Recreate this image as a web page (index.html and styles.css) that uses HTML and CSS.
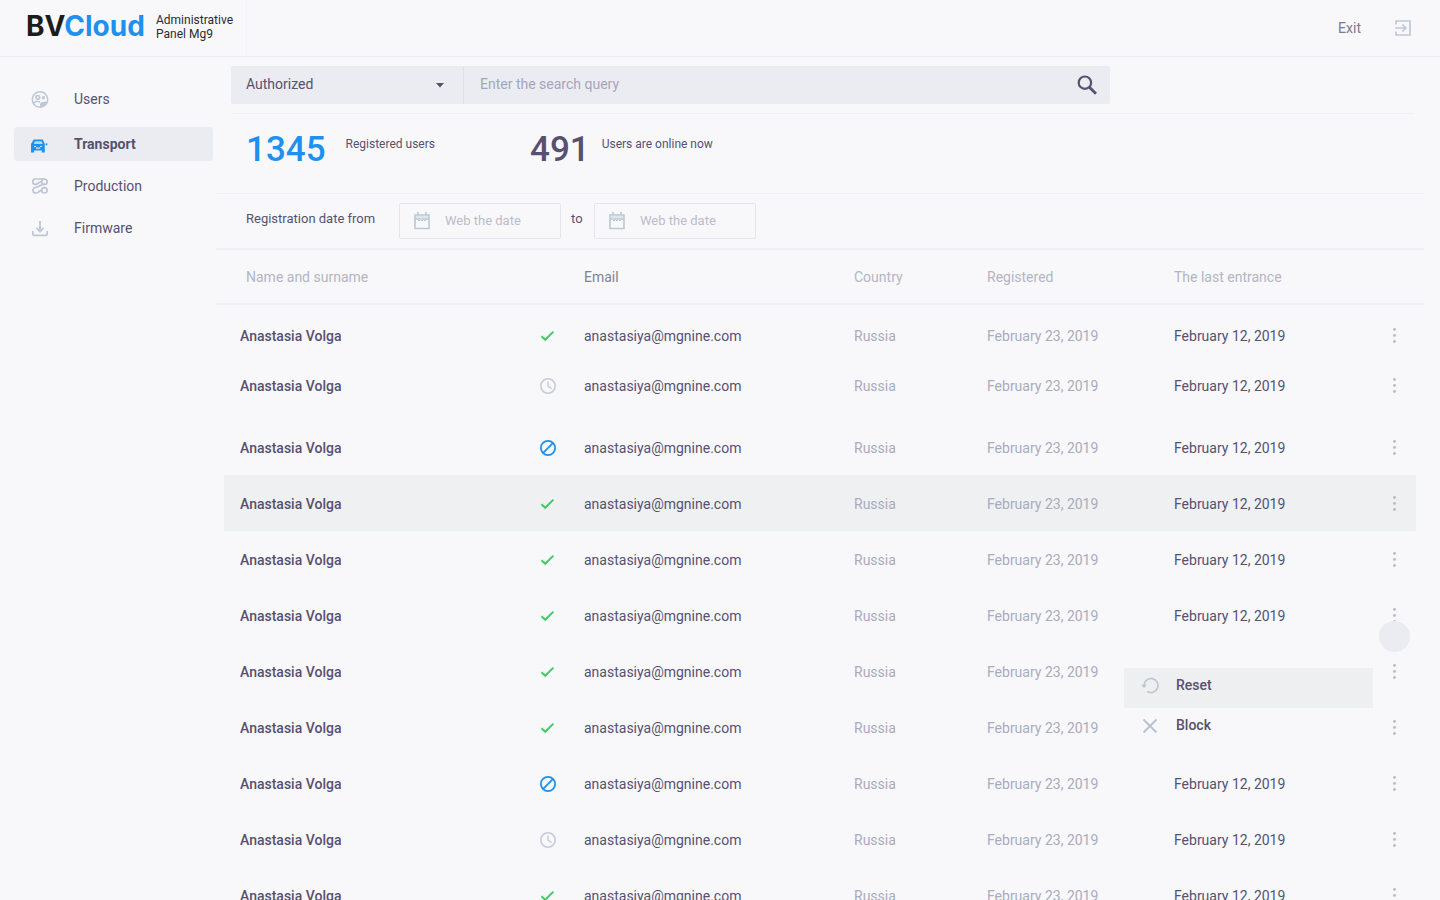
FILE: index.html
```html
<!doctype html>
<html lang="en">
<head>
    <meta charset="UTF-8">
    <meta name="viewport" content="width=device-width, initial-scale=1.0">
    <title>BVCloud - Administrative Panel</title>

    <link rel="stylesheet" href="styles.css">
</head>
<body>
    <!-- Shared icons -->
    <svg class="sprite" aria-hidden="true">
        <symbol id="icon-check" viewBox="0 0 16 16">
            <path d="M1.5 8.2 5.2 11.8 13.4 3.6" fill="none" stroke="#43cb67" stroke-width="2"/>
        </symbol>
        <symbol id="icon-clock" viewBox="0 0 16 16">
            <circle cx="8" cy="8" r="7.2" fill="none" stroke="#c6cbd8" stroke-width="1.6"/>
            <path d="M8 3.5V8.2L11.5 10.6" fill="none" stroke="#c6cbd8" stroke-width="1.4"/>
        </symbol>
        <symbol id="icon-blocked" viewBox="0 0 16 16">
            <circle cx="8" cy="8" r="7.1" fill="none" stroke="#1e90ee" stroke-width="1.8"/>
            <path d="M12.8 3.2 3.2 12.8" fill="none" stroke="#1e90ee" stroke-width="1.8"/>
        </symbol>
        <symbol id="icon-dots" viewBox="0 0 4 16">
            <circle cx="2.5" cy="1.5" r="1.4"/>
            <circle cx="2.5" cy="7.5" r="1.4"/>
            <circle cx="2.5" cy="13.5" r="1.4"/>
        </symbol>
        <symbol id="icon-calendar" viewBox="0 0 16 18">
            <path d="M1 3H15V16.5H1ZM1 7H15M4 0V3M12 0V3" fill="none" stroke="#bac8d5" stroke-width="1.6"/>
            <path d="M2 4H14V6H2Z" fill="#dde4eb"/>
            <path d="M4 8.5H12" fill="none" stroke="#bac8d5" stroke-width="1" stroke-dasharray="2 1"/>
        </symbol>
    </svg>

    <header class="header">
        <a class="logo" href="#">BV<span>Cloud</span></a>
        <p class="panel-name">Administrative<br>Panel Mg9</p>
        <a class="exit" href="#">
            Exit
            <svg width="16" height="16" viewBox="0 0 16 16" fill="none" stroke="#bfc8d5" stroke-width="1.7">
                <path d="M1 4.5V1H15V15H1V11.5M0 8H10.5M7.4 4.5 10.9 8 7.4 11.5"/>
            </svg>
        </a>
    </header>

    <div class="layout">
        <nav class="sidebar">
            <a class="nav-item" href="#">
                <svg width="18" height="18" viewBox="0 0 18 18" fill="none" stroke="#bcc6d4" stroke-width="1.5">
                    <circle cx="9" cy="9.5" r="7.7"/>
                    <circle cx="6.8" cy="7.3" r="1.9"/>
                    <circle cx="12.4" cy="7.7" r="1"/>
                    <path d="M2.5 13.1C4 11.3 7 10.9 9 12"/>
                    <path d="M9 17V14C10 11.8 13 11.2 16 12 15 15 12 17 9 17Z" fill="#bcc6d4" stroke="none"/>
                </svg>
                Users
            </a>
            <a class="nav-item active" href="#">
                <svg width="18" height="18" viewBox="0 0 18 18">
                    <path d="M2.7 4.5H11.8L13.8 9V17.5H10.8V15.5H3.2V17.5H0V9Z" fill="#1e90ee"/>
                    <path d="M4 6.2H10.6L11.6 9H2.8Z" fill="#b5d8f5"/>
                    <path d="M3.2 11.5H5M9 11.5H10.8M5 13.2H9.2" stroke="#d8e6f4" stroke-width="1.2"/>
                    <circle cx="15.5" cy="9.2" r="1" fill="#1e90ee"/>
                </svg>
                Transport
            </a>
            <a class="nav-item" href="#">
                <svg width="18" height="18" viewBox="0 0 18 18" fill="none" stroke="#bcc6d4" stroke-width="1.7">
                    <circle cx="13.4" cy="4.7" r="2.7"/>
                    <circle cx="13.4" cy="13.3" r="2.7"/>
                    <path d="M13.4 2H4.4A2.7 2.7 0 0 0 4.4 7.4C7 7.4 8 4.4 10.7 4.7"/>
                    <path d="M13.4 7.4C9 7.4 9 9.6 4.8 10.4A2.8 2.8 0 0 0 4.8 16C8 16 8 13.3 10.7 13.3"/>
                </svg>
                Production
            </a>
            <a class="nav-item" href="#">
                <svg width="18" height="18" viewBox="0 0 18 18" fill="none" stroke="#bcc6d4" stroke-width="1.7">
                    <path d="M9 2V12.5M5.4 8.9 9 12.5 12.6 8.9M1.8 12V14.6C1.8 15.8 2.4 16.4 3.6 16.4H14.4C15.6 16.4 16.2 15.8 16.2 14.6V12"/>
                </svg>
                Firmware
            </a>
        </nav>

        <main class="content">
            <form class="search">
                <div class="search-bar">
                    <div class="search-type">
                        <select aria-label="User status">
                            <option>Authorized</option>
                            <option>Blocked</option>
                        </select>
                        <svg width="10" height="5" viewBox="0 0 10 5" fill="#56516f"><path d="M1 0H9L5 4.5Z"/></svg>
                    </div>
                    <input type="text" name="q" aria-label="Search" placeholder="Enter the search query">
                    <button type="submit" aria-label="Search">
                        <svg width="20" height="20" viewBox="0 0 20 20" fill="none" stroke="#56516f" stroke-width="2.2">
                            <circle cx="7.9" cy="7.7" r="6.2"/>
                            <path d="M12.4 12.2 19 18.8" stroke-width="2.8"/>
                        </svg>
                    </button>
                </div>
            </form>

            <section class="stats">
                <div class="stat registered"><strong>1345</strong><span>Registered users</span></div>
                <div class="stat"><strong>491</strong><span>Users are online now</span></div>
            </section>

            <form class="filters">
                <label for="date-from">Registration date from</label>
                <div class="date-field">
                    <svg width="16" height="18"><use href="#icon-calendar"/></svg>
                    <input type="text" id="date-from" placeholder="Web the date">
                </div>
                <label for="date-to">to</label>
                <div class="date-field">
                    <svg width="16" height="18"><use href="#icon-calendar"/></svg>
                    <input type="text" id="date-to" placeholder="Web the date">
                </div>
            </form>

            <table class="users">
                <colgroup>
                    <col class="col-name">
                    <col class="col-status">
                    <col class="col-email">
                    <col class="col-country">
                    <col class="col-registered">
                    <col class="col-entrance">
                    <col class="col-menu">
                </colgroup>
                <thead>
                    <tr>
                        <th>Name and surname</th>
                        <th></th>
                        <th class="sorted">Email</th>
                        <th>Country</th>
                        <th>Registered</th>
                        <th>The last entrance</th>
                        <th></th>
                    </tr>
                </thead>
                <tbody id="userRows"></tbody>
            </table>
        </main>
    </div>

    <template id="rowMenu">
        <span class="ripple"></span>
        <div class="row-menu">
            <button type="button" class="selected">
                <svg width="18" height="18" viewBox="0 0 18 18" fill="none" stroke="#bcc6d4" stroke-width="1.6">
                    <path d="M3 10A7 7 0 1 1 6 15.3"/>
                    <path d="M0 8.8H6L3 12.1Z" fill="#bcc6d4" stroke="none"/>
                </svg>
                Reset
            </button>
            <button type="button">
                <svg width="18" height="18" viewBox="0 0 18 18" fill="none" stroke="#b6c1d0" stroke-width="1.8">
                    <path d="M2.5 3.5 15.5 16.5M15.5 3.5 2.5 16.5"/>
                </svg>
                Block
            </button>
        </div>
    </template>

    <script>
        const statuses = ['check', 'clock', 'blocked', 'check', 'check', 'check', 'check', 'check', 'blocked', 'clock', 'check'];
        const highlighted = 3;
        const opened = 5;

        const rows = document.getElementById('userRows');

        statuses.forEach(function (status, index) {
            const row = document.createElement('tr');

            if (index === highlighted) {
                row.className = 'highlighted';
            }

            row.innerHTML = `
                <td class="name">Anastasia Volga</td>
                <td><svg width="16" height="16"><use href="#icon-${status}"/></svg></td>
                <td>anastasiya@mgnine.com</td>
                <td class="muted">Russia</td>
                <td class="muted">February 23, 2019</td>
                <td>February 12, 2019</td>
                <td class="actions">
                    <button type="button" class="dots" aria-label="Actions"><svg width="4" height="16"><use href="#icon-dots"/></svg></button>
                </td>`;

            // Only one row has its menu open at a time
            if (index === opened) {
                row.querySelector('.actions').append(document.getElementById('rowMenu').content.cloneNode(true));
            }

            rows.append(row);
        });
    </script>
</body>
</html>
```
FILE: styles.css
```css
* {
    box-sizing: border-box;
}

body {
    display: flex;
    flex-direction: column;
    height: 100vh;
    margin: 0;
    background-color: #f8f8fb;
    color: #56516f;
    font-family: Roboto, sans-serif;
    font-size: 14px;
    line-height: 16px;
    overflow: hidden;
}

a {
    color: inherit;
    text-decoration: none;
}

button, input, select {
    padding: 0;
    border: 0;
    background: none;
    color: inherit;
    font: inherit;
}

input {
    min-width: 0;
}

button {
    cursor: pointer;
}

svg {
    display: block;
    flex: none;
}

.sprite {
    position: absolute;
    width: 0;
    height: 0;
}

/* Header */
.header {
    display: flex;
    flex: none;
    align-items: center;
    height: 57px;
    padding: 0 29px 0 26px;
    border-bottom: 1px solid #ebebf0;
}

.logo {
    width: 130px;
    padding-bottom: 4px;
    color: #1c1c1c;
    font-family: Inter, sans-serif;
    font-size: 28px;
    font-weight: 700;
    line-height: 32px;
}

.logo span {
    color: #1e90ee;
}

.panel-name {
    display: flex;
    align-items: center;
    width: 91px;
    height: 56px;
    margin: 0;
    padding-bottom: 2px;
    border-right: 1px solid #f4f4f8;
    color: #2b2b2f;
    font-size: 12px;
    line-height: 14px;
}

.exit {
    display: flex;
    align-items: center;
    gap: 34px;
    margin-left: auto;
    color: #7d7990;
}

/* Sidebar */
.layout {
    display: flex;
    flex: 1;
    min-height: 0;
}

.sidebar {
    display: flex;
    flex: none;
    flex-direction: column;
    gap: 8px;
    width: 216px;
    padding: 25px 3px 0 14px;
}

.nav-item {
    display: flex;
    align-items: center;
    gap: 25px;
    height: 34px;
    padding-left: 17px;
    border-radius: 4px;
}

.nav-item.active {
    margin-top: 3px;
    background-color: #ebecf2;
    font-weight: 700;
}

/* Content */
.content {
    flex: 1;
    min-width: 0;
    padding-right: 16px;
    overflow-y: auto;
    scrollbar-width: none;
}

.search {
    margin: 0 10px 0 15px;
    padding: 9px 0;
    border-bottom: 1px solid #f1f1f5;
}

.search-bar {
    display: flex;
    width: 100%;
    max-width: 879px;
    height: 38px;
    border-radius: 2px;
    background-color: #ebecf2;
}

.search-type {
    display: flex;
    align-items: center;
    width: 233px;
    padding-right: 18px;
    border-right: 1px solid #dfe0e8;
}

.search-type select {
    flex: 1;
    height: 100%;
    padding: 0 15px 2px;
    appearance: none;
}

.search-bar input {
    flex: 1;
    padding: 0 16px 2px;
}

.search-bar button {
    padding: 0 13px;
}

.search-bar input::placeholder {
    color: #a3a6bb;
    opacity: 1;
}

.stats {
    display: flex;
    height: 80px;
    padding: 16px 30px;
    border-bottom: 1px solid #f1f1f5;
}

.stat {
    display: flex;
    gap: 20px;
    font-size: 12px;
    line-height: 28px;
}

.stat.registered {
    width: 284px;
}

.stat strong {
    font-size: 35px;
    font-weight: 500;
    line-height: 40px;
}

.stat.registered strong {
    color: #1e90ee;
}

.stat:last-child {
    gap: 12px;
}

.filters {
    display: flex;
    align-items: center;
    height: 56px;
    padding: 0 30px;
    border-bottom: 2px solid #eeeff2;
}

.filters label {
    width: 153px;
    padding-bottom: 4px;
    font-size: 13px;
}

.date-field + label {
    width: 33px;
    padding-left: 10px;
}

.date-field {
    display: flex;
    align-items: center;
    gap: 15px;
    width: 162px;
    height: 36px;
    padding: 0 14px;
    border: 1px solid #e3e6ed;
    border-radius: 2px;
}

.date-field input {
    flex: 1;
    height: 100%;
    padding-bottom: 2px;
    font-size: 13px;
}

.date-field input::placeholder {
    color: #bbbcca;
    opacity: 1;
}

/* Users table */
.users {
    width: 100%;
    border-spacing: 0;
    table-layout: fixed;
}

.col-name {
    width: 324px;
}

.col-status {
    width: 44px;
}

.col-email {
    width: 270px;
}

.col-country {
    width: 133px;
}

.col-registered {
    width: 187px;
}

.col-entrance {
    width: 190px;
}

.col-menu {
    width: 60px;
}

.users th {
    height: 55px;
    padding: 0;
    border-bottom: 2px solid #eeeff2;
    color: #b4b5c2;
    font-weight: 400;
    text-align: left;
}

.users th:first-child {
    padding-left: 30px;
}

.users th.sorted {
    color: #85828f;
}

.users td {
    height: 56px;
    padding: 2px 0 0;
    background-clip: padding-box;
}

/* Keeps the row background clear of the table edges */
.users td:first-child {
    padding-left: 16px;
    border-left: 8px solid transparent;
}

.users td:last-child {
    border-right: 8px solid transparent;
}

.users tr:first-child td {
    height: 62px;
    padding-top: 0;
}

.users tr:nth-child(2) td {
    height: 52px;
    padding-top: 0;
    padding-bottom: 14px;
}

.users .highlighted td {
    background-color: #eef0f2;
}

.users .name {
    font-weight: 500;
}

.users .muted {
    color: #a9acbb;
}

.users .actions {
    position: relative;
}

.dots {
    display: flex;
    justify-content: center;
    width: 20px;
    margin-left: 20px;
    fill: #b9bbc3;
}

.ripple {
    position: absolute;
    top: 34px;
    right: 6px;
    width: 31px;
    height: 31px;
    border-radius: 50%;
    background-color: #ebecf2;
}

.row-menu {
    position: absolute;
    z-index: 1;
    top: 74px;
    right: 43px;
    width: 249px;
    padding: 7px 0 8px;
    border-radius: 4px;
    background-color: #f8f8fb;
}

.row-menu button {
    display: flex;
    align-items: center;
    gap: 17px;
    width: 100%;
    height: 40px;
    padding: 0 17px 6px;
    font-weight: 500;
}

.row-menu .selected {
    background-color: #eeeff1;
}
```
